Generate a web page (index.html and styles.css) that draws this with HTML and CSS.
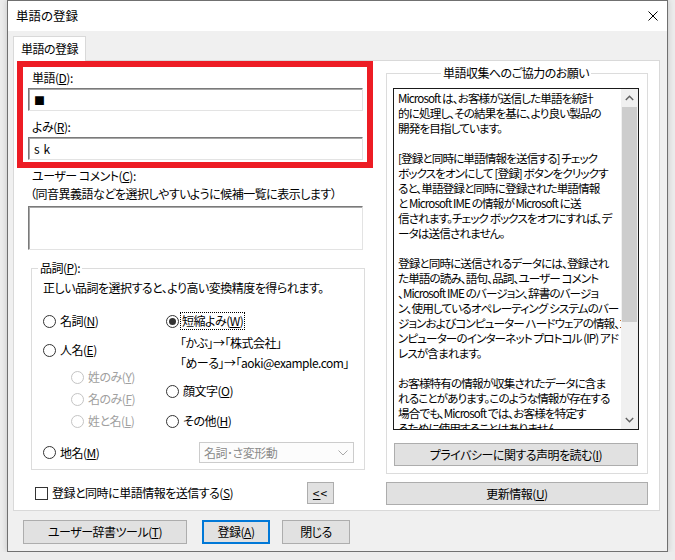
FILE: index.html
```html
<!DOCTYPE html>
<html lang="ja">
<head>
  <meta charset="UTF-8" />
  <title>単語の登録</title>
  <link rel="stylesheet" href="styles.css">
</head>
<body>
  <div class="window">
    <div class="titlebar">
      <span class="title">単語の登録</span>
      <svg class="close" width="10" height="10" viewBox="0 0 10 10">
        <path d="M0.5 0.5 L9.5 9.5 M9.5 0.5 L0.5 9.5" stroke="#000" stroke-width="1" fill="none" />
      </svg>
    </div>

    <div class="client">
      <div class="tab">単語の登録</div>
      <div class="panel">

        <div class="left">
          <div class="highlight">
            <div class="field-label">単語(<u>D</u>):</div>
            <div class="input"><span class="square">■</span></div>
            <div class="field-label second">よみ(<u>R</u>):</div>
            <div class="input">s&nbsp;&nbsp;k</div>
          </div>

          <div class="comment-label">ユーザー コメント(<u>C</u>):</div>
          <div class="comment-hint">（同音異義語などを選択しやすいように候補一覧に表示します）</div>
          <div class="comment-box"></div>

          <fieldset class="pos">
            <legend>品詞(<u>P</u>):</legend>
            <div class="pos-desc">正しい品詞を選択すると、より高い変換精度を得られます。</div>
            <div class="pos-cols">
              <div class="col1">
                <div class="radio"><span class="dot"></span><span>名詞(<u>N</u>)</span></div>
                <div class="radio person"><span class="dot"></span><span>人名(<u>E</u>)</span></div>
                <div class="sub">
                  <div class="radio disabled"><span class="dot"></span><span>姓のみ(<u>Y</u>)</span></div>
                  <div class="radio disabled"><span class="dot"></span><span>名のみ(<u>F</u>)</span></div>
                  <div class="radio disabled"><span class="dot"></span><span>姓と名(<u>L</u>)</span></div>
                </div>
              </div>
              <div class="col2">
                <div class="radio"><span class="dot checked"></span><span class="focus">短縮よみ(<u>W</u>)</span></div>
                <div class="example first">「かぶ」→「株式会社」</div>
                <div class="example">「めーる」→「aoki@example.com」</div>
                <div class="radio face"><span class="dot"></span><span>顔文字(<u>O</u>)</span></div>
                <div class="radio other"><span class="dot"></span><span>その他(<u>H</u>)</span></div>
              </div>
            </div>
            <div class="pos-last">
              <div class="radio"><span class="dot"></span><span>地名(<u>M</u>)</span></div>
              <div class="select">
                <span>名詞･さ変形動</span>
                <svg width="10" height="6" viewBox="0 0 10 6">
                  <polyline points="0.5,0.5 5,5 9.5,0.5" stroke="#a8a8a8" stroke-width="1" fill="none" />
                </svg>
              </div>
            </div>
          </fieldset>

          <div class="send-row">
            <span class="check"></span>
            <span class="send-label">登録と同時に単語情報を送信する(<u>S</u>)</span>
            <button class="btn collapse"><u>&lt;</u>&lt;</button>
          </div>
        </div>

        <div class="right">
          <fieldset class="collect">
            <legend>単語収集へのご協力のお願い</legend>
            <div class="info">
              <div class="info-text">
                Microsoft は、お客様が送信した単語を統計<br>
                的に処理し、その結果を基に、より良い製品の<br>
                開発を目指しています。<br>
                <br>
                [登録と同時に単語情報を送信する] チェック<br>
                ボックスをオンにして [登録] ボタンをクリックす<br>
                ると、単語登録と同時に登録された単語情報<br>
                と Microsoft IME の情報が Microsoft に送<br>
                信されます。チェック ボックスをオフにすれば、デ<br>
                ータは送信されません。<br>
                <br>
                登録と同時に送信されるデータには、登録され<br>
                た単語の読み、語句、品詞、ユーザー コメント<br>
                、Microsoft IME のバージョン、辞書のバージョ<br>
                ン、使用しているオペレーティング システムのバー<br>
                ジョンおよびコンピューター ハードウェアの情報、コ<br>
                ンピューターのインターネット プロトコル (IP) アド<br>
                レスが含まれます。<br>
                <br>
                お客様特有の情報が収集されたデータに含ま<br>
                れることがあります。このような情報が存在する<br>
                場合でも、Microsoft では、お客様を特定す<br>
                るために使用することはありません。
              </div>
              <div class="scrollbar">
                <div class="arrow">
                  <svg width="9" height="6" viewBox="0 0 9 6">
                    <polyline points="0.8,5 4.5,1.3 8.2,5" stroke="#606060" stroke-width="1.4" fill="none" />
                  </svg>
                </div>
                <div class="thumb"></div>
                <div class="track"></div>
                <div class="arrow">
                  <svg width="9" height="6" viewBox="0 0 9 6">
                    <polyline points="0.8,1 4.5,4.7 8.2,1" stroke="#606060" stroke-width="1.4" fill="none" />
                  </svg>
                </div>
              </div>
            </div>
            <button class="btn privacy">プライバシーに関する声明を読む(<u>I</u>)</button>
          </fieldset>
          <button class="btn update">更新情報(<u>U</u>)</button>
        </div>

      </div>

      <div class="buttons">
        <button class="btn tool">ユーザー辞書ツール(<u>T</u>)</button>
        <button class="btn register">登録(<u>A</u>)</button>
        <button class="btn close-btn">閉じる</button>
      </div>
    </div>
  </div>
</body>
</html>
```

FILE: styles.css
```css
body {
  margin: 0;
  background: #ececec;
  font-family: "Noto Sans CJK JP", sans-serif;
  font-size: 12px;
  font-feature-settings: "palt";
  letter-spacing: -0.5px;
  color: #000;
}
u {
  text-underline-offset: 1px;
}
.window {
  margin-left: 7px;
  width: 661px;
  height: 552px;
  box-sizing: border-box;
  border: 1px solid #707070;
  background: #f0f0f0;
  display: flex;
  flex-direction: column;
  box-shadow: 0 0 6px rgba(0, 0, 0, 0.18);
}
.titlebar {
  height: 30px;
  flex: none;
  background: #fff;
  display: flex;
  align-items: center;
  padding-left: 8px;
}
.title {
  font-size: 12.5px;
  letter-spacing: 0;
  line-height: 16px;
}
.close {
  margin-left: auto;
  margin-right: 9px;
}
.client {
  flex: 1;
  padding: 5px 0 0 5px;
}
.tab {
  position: relative;
  z-index: 1;
  width: 73px;
  height: 25px;
  box-sizing: border-box;
  border: 1px solid #d9d9d9;
  border-bottom: none;
  background: #fff;
  margin-bottom: -1px;
  display: flex;
  align-items: center;
  justify-content: center;
  line-height: 16px;
}
.panel {
  width: 647px;
  height: 451px;
  box-sizing: border-box;
  border: 1px solid #d9d9d9;
  background: #fff;
  display: flex;
}
.left {
  width: 372px;
  flex: none;
}
.right {
  width: 262px;
  flex: none;
}

/* word / reading */
.highlight {
  margin-left: 3px;
  width: 356px;
  height: 107px;
  box-sizing: border-box;
  border: 6px solid #ed1c24;
  padding: 3px 0 0 5px;
}
.field-label {
  line-height: 16px;
  margin-left: 4px;
}
.field-label.second {
  margin-top: 8px;
}
.input {
  width: 335px;
  height: 23px;
  box-sizing: border-box;
  margin-top: 2px;
  border: 1px solid;
  border-color: #7a7a7a #e3e3e3 #e3e3e3 #7a7a7a;
  box-shadow: inset 1px 1px 0 #a8a8a8;
  background: #fff;
  display: flex;
  align-items: center;
  padding-left: 5px;
  line-height: 16px;
}
.square {
  font-size: 11px;
}

/* comment */
.comment-label {
  margin-left: 18px;
  line-height: 16px;
}
.comment-hint {
  margin: 2px 0 0 16px;
  line-height: 16px;
}
.comment-box {
  margin: 4px 0 0 14px;
  width: 335px;
  height: 44px;
  box-sizing: border-box;
  border: 1px solid;
  border-color: #7a7a7a #e3e3e3 #e3e3e3 #7a7a7a;
  box-shadow: inset 1px 1px 0 #a8a8a8;
  background: #fff;
}

/* part of speech */
fieldset {
  margin: 0;
  min-width: 0;
  border: 1px solid #dcdcdc;
}
legend {
  line-height: 16px;
  padding: 0 2px;
}
.pos {
  margin: 10px 0 0 17px;
  width: 334px;
  box-sizing: border-box;
  padding: 0 10px 6px 11px;
}
.pos legend {
  margin-left: -5px;
}
.pos-desc {
  margin-top: 4px;
  line-height: 16px;
}
.pos-cols {
  display: flex;
  margin-top: 15px;
}
.col1 {
  width: 123px;
}
.radio {
  display: flex;
  align-items: center;
  gap: 4px;
  height: 20px;
  line-height: 16px;
  white-space: nowrap;
}
.dot {
  width: 13px;
  height: 13px;
  box-sizing: border-box;
  border: 1px solid #333;
  border-radius: 50%;
  background: #fff;
  display: flex;
  align-items: center;
  justify-content: center;
  flex: none;
}
.dot.checked::after {
  content: "";
  width: 7px;
  height: 7px;
  border-radius: 50%;
  background: #333;
}
.radio.disabled {
  color: #a0a0a0;
}
.radio.disabled .dot {
  border-color: #c4c4c4;
}
.person {
  margin-top: 9px;
}
.sub {
  margin-left: 28px;
  margin-top: 7px;
}
.sub .radio + .radio {
  margin-top: 2px;
}
.focus {
  outline: 1px dotted #000;
  padding: 0 1px;
  margin-left: -2px;
}
.example {
  margin-left: 14px;
  line-height: 20px;
  white-space: nowrap;
}
.example.first {
  margin-top: 2px;
}
.face {
  margin-top: 8px;
}
.other {
  margin-top: 10px;
}
.pos-last {
  display: flex;
  align-items: center;
  height: 21px;
  margin-top: 11px;
}
.select {
  margin-left: auto;
  width: 155px;
  height: 21px;
  box-sizing: border-box;
  border: 1px solid #cccccc;
  background: #fcfcfc;
  color: #8a8a8a;
  display: flex;
  align-items: center;
  justify-content: space-between;
  padding: 0 5px 0 4px;
  line-height: 16px;
}

/* send row */
.send-row {
  display: flex;
  align-items: center;
  height: 22px;
  margin-top: 12px;
}
.check {
  width: 13px;
  height: 13px;
  box-sizing: border-box;
  border: 1px solid #333;
  background: #fff;
  margin-left: 21px;
}
.send-label {
  margin-left: 4px;
  line-height: 16px;
}
.btn {
  font: inherit;
  font-feature-settings: "palt";
  letter-spacing: -0.5px;
  color: #000;
  background: #e1e1e1;
  border: 1px solid #adadad;
  padding: 0;
  line-height: 16px;
  box-sizing: border-box;
}
.collapse {
  margin-left: auto;
  margin-right: 52px;
  width: 27px;
  height: 22px;
  letter-spacing: 1px;
}

/* right group */
.collect {
  margin-top: 4px;
  width: 262px;
  box-sizing: border-box;
  padding: 0 8px 7px 6px;
}
.collect legend {
  margin: 0 auto;
}
.info {
  margin-top: 7px;
  height: 342px;
  box-sizing: border-box;
  border: 1px solid #1a1a1a;
  background: #fff;
  display: flex;
}
.info-text {
  flex: 1;
  overflow: hidden;
  white-space: nowrap;
  padding: 2px 0 0 4px;
  font-size: 11.6px;
  line-height: 15px;
  letter-spacing: -0.9px;
}
.scrollbar {
  width: 17px;
  flex: none;
  background: #f0f0f0;
  display: flex;
  flex-direction: column;
}
.arrow {
  height: 18px;
  display: flex;
  align-items: center;
  justify-content: center;
}
.thumb {
  height: 215px;
  margin: 0 1px;
  background: #cdcdcd;
}
.track {
  flex: 1;
}
.privacy {
  display: block;
  margin: 13px 1px 0;
  width: 244px;
  height: 23px;
}
.update {
  display: block;
  margin-top: 8px;
  width: 262px;
  height: 23px;
}

/* bottom buttons */
.buttons {
  display: flex;
  margin-top: 9px;
  padding-left: 10px;
}
.buttons .btn {
  height: 24px;
}
.tool {
  width: 164px;
}
.register {
  width: 68px;
  margin-left: 15px;
  border: 2px solid #0078d7;
}
.close-btn {
  width: 68px;
  margin-left: 12px;
}
```
